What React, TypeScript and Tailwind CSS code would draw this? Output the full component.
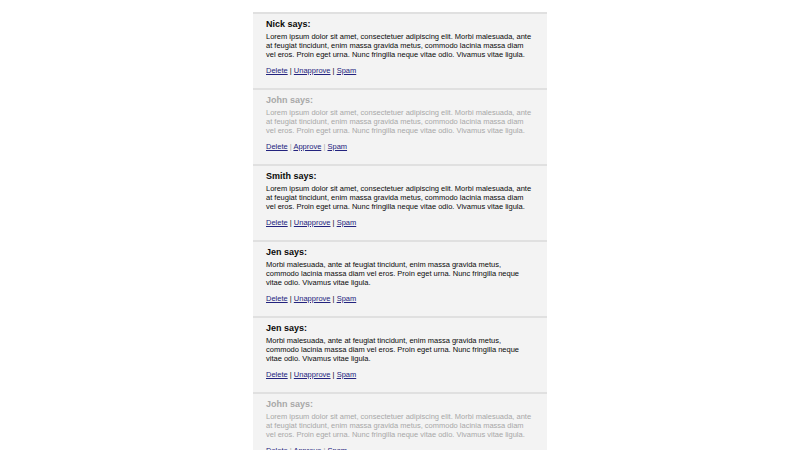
import React from "react";

type C = { name: string; text: string; approved: boolean };

const L1 =
  "Lorem ipsum dolor sit amet, consectetuer adipiscing elit. Morbi malesuada, ante at feugiat tincidunt, enim massa gravida metus, commodo lacinia massa diam vel eros. Proin eget urna. Nunc fringilla neque vitae odio. Vivamus vitae ligula.";
const L2 =
  "Morbi malesuada, ante at feugiat tincidunt, enim massa gravida metus, commodo lacinia massa diam vel eros. Proin eget urna. Nunc fringilla neque vitae odio. Vivamus vitae ligula.";

const comments: C[] = [
  { name: "Nick", text: L1, approved: true },
  { name: "John", text: L1, approved: false },
  { name: "Smith", text: L1, approved: true },
  { name: "Jen", text: L2, approved: true },
  { name: "Jen", text: L2, approved: true },
  { name: "John", text: L1, approved: false },
];

export default function App() {
  return (
    <div
      className="w-[800px] h-[450px] overflow-hidden bg-white pt-[12px]"
      style={{ fontFamily: '"Liberation Sans", Arial, sans-serif' }}
    >
      <div className="mx-auto w-[294px]">
        {comments.map((c, i) => (
          <div
            key={i}
            className={`h-[76px] border-t-2 border-[#e0e0e0] bg-[#f3f3f3] px-[13px] pt-[5px] ${
              c.approved ? "text-[#0a0a0a]" : "text-[#a8a8a8]"
            }`}
          >
            <div className="text-[9px] leading-[11px] font-bold mb-[1.5px]">{c.name} says:</div>
            <p className="text-[7.5px] leading-[9px]">{c.text}</p>
            <div className="mt-[7px] text-[7.5px] leading-[9px]">
              <a href="#" className="underline text-[#23237e]">Delete</a>
              {" | "}
              <a href="#" className="underline text-[#23237e]">
                {c.approved ? "Unapprove" : "Approve"}
              </a>
              {" | "}
              <a href="#" className="underline text-[#23237e]">Spam</a>
            </div>
          </div>
        ))}
      </div>
    </div>
  );
}
